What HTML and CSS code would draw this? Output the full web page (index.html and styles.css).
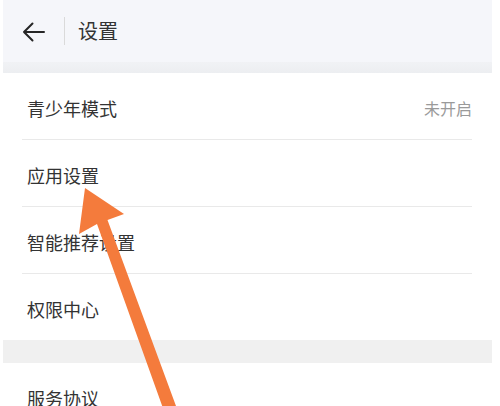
FILE: index.html
```html
<!DOCTYPE html>
<html lang="zh">
<head>
<meta charset="utf-8">
<link rel="stylesheet" href="styles.css">
</head>
<body>
<div class="app">
  <header class="header">
    <svg class="back" width="23" height="20" viewBox="0 0 23 20"><path d="M22 10H2 M10.5 1.5L2 10l8.5 8.5" fill="none" stroke="#262626" stroke-width="2" stroke-linecap="round" stroke-linejoin="round"/></svg>
    <span class="divider"></span>
    <span class="title">设置</span>
  </header>
  <div class="band"></div>
  <div class="row"><div class="row-inner"><span class="label">青少年模式</span><span class="value">未开启</span></div></div>
  <div class="row"><div class="row-inner"><span class="label">应用设置</span></div></div>
  <div class="row"><div class="row-inner"><span class="label">智能推荐设置</span></div></div>
  <div class="row"><div class="row-inner last"><span class="label">权限中心</span></div></div>
  <div class="gap"></div>
  <div class="row"><div class="row-inner last"><span class="label">服务协议</span></div></div>
</div>
<svg class="pointer" width="500" height="406" viewBox="0 0 500 406"><path d="M85 188 L124 214 L107.5 220 L176 406 L164 411 L97 224 L79 234 Z" fill="#f47b3c"/></svg>
</body>
</html>
```
FILE: styles.css
```css
html, body { margin: 0; padding: 0; }
body {
  background: #fff;
  width: 500px;
  height: 406px;
  overflow: hidden;
  position: relative;
  font-family: "Noto Sans CJK SC", "Noto Sans", sans-serif;
  color: #333;
}
.app {
  margin-left: 3px;
  width: 489px;
}
.header {
  height: 62px;
  background: #f5f6fa;
  display: flex;
  align-items: center;
  padding-left: 19px;
}
.back { display: block; margin-top: 1px; }
.divider {
  width: 1px;
  height: 28px;
  background: #dadada;
  margin-left: 19px;
}
.title {
  margin-left: 13px;
  font-size: 20px;
  color: #333;
  line-height: 1;
}
.band {
  height: 11px;
  background: linear-gradient(#f1f2f5, #eceef1);
}
.row {
  padding: 0 20px 0 19px;
  background: #fff;
}
.row-inner {
  height: 66px;
  border-bottom: 1px solid #e9e9e9;
  display: flex;
  align-items: center;
  justify-content: space-between;
  padding-left: 5px;
}
.row-inner.last { border-bottom: none; }
.label {
  font-size: 18px;
  color: #333;
  margin-top: 3px;
}
.value {
  font-size: 16px;
  color: #9a9a9a;
  margin-top: 3px;
}
.gap {
  height: 23px;
  background: #f0f0f0;
}
.pointer {
  position: absolute;
  left: 0;
  top: 0;
}
```
